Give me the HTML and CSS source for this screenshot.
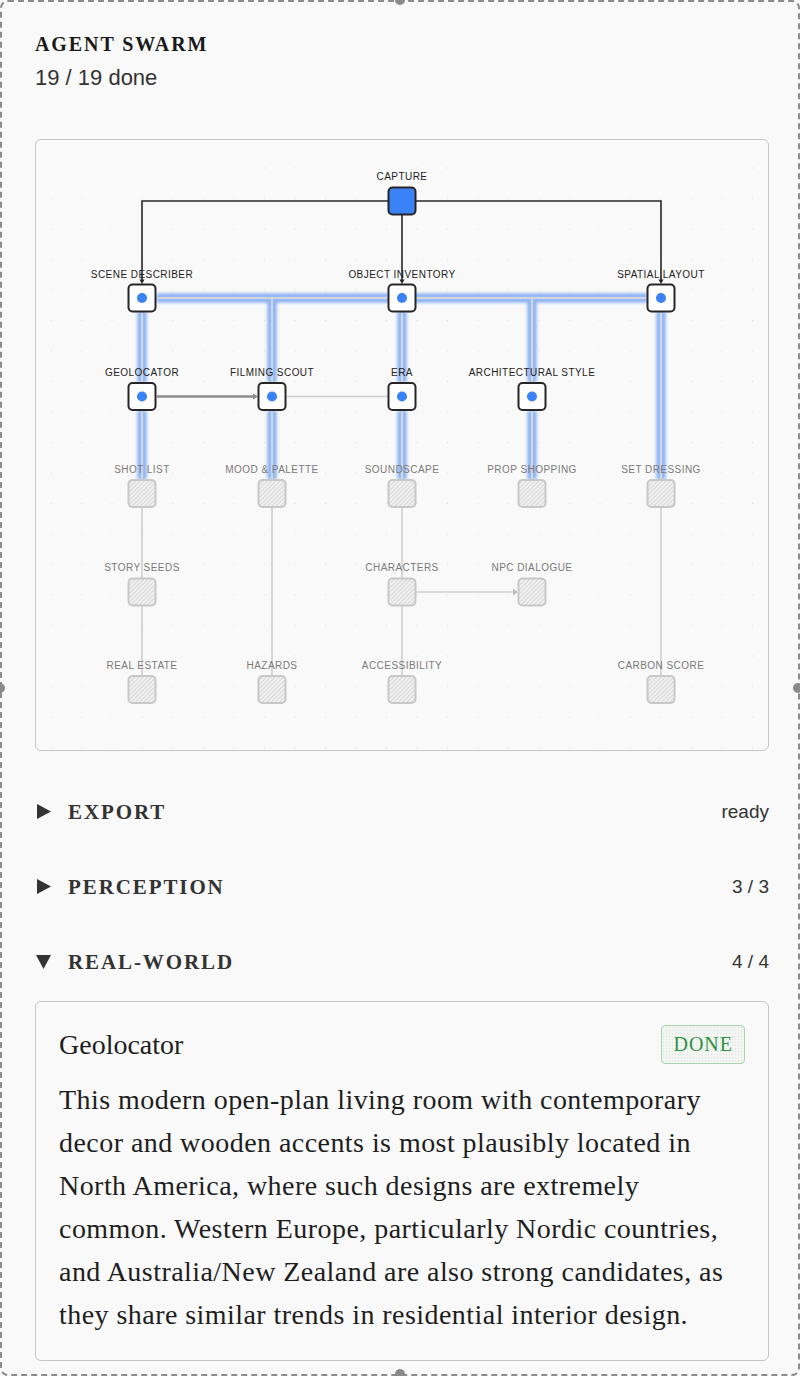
FILE: index.html
```html
<!DOCTYPE html>
<html lang="en">
<head>
<meta charset="utf-8">
<title>Agent Swarm</title>
<link rel="stylesheet" href="styles.css">
</head>
<body>
<div class="frame">
  <span class="handle h-top"></span>
  <span class="handle h-left"></span>
  <span class="handle h-right"></span>
  <span class="handle h-bottom"></span>

  <header class="head">
    <h1 class="title">AGENT SWARM</h1>
    <div class="progress">19 / 19 done</div>
  </header>

  <section class="graph">
    <svg class="graph-svg" width="732" height="610" viewBox="36 139 732 610" xmlns="http://www.w3.org/2000/svg">
      <defs>
        <pattern id="hatch" width="3" height="3" patternUnits="userSpaceOnUse" patternTransform="rotate(45)">
          <rect width="3" height="3" fill="#f0f0f0"/>
          <line x1="0.5" y1="0" x2="0.5" y2="3" stroke="#d8d8d8" stroke-width="1"/>
        </pattern>
        <pattern id="dots" x="20" y="14" width="30.5" height="30.5" patternUnits="userSpaceOnUse">
          <rect x="0" y="0" width="1" height="1" fill="#dedede"/>
        </pattern>
        <filter id="glow" filterUnits="userSpaceOnUse" x="36" y="139" width="732" height="610">
          <feGaussianBlur stdDeviation="1.6"/>
        </filter>
      </defs>

      <rect x="36" y="139" width="732" height="610" fill="url(#dots)"/>

      <!-- active (blue) edges -->
      <g class="blue-edges">
        <path class="glow-outer" filter="url(#glow)" d="M157 297H647 M272 297V381 M402 311V381 M532 297V381 M142 311V381 M142 410V478 M272 410V478 M402 410V478 M532 410V478 M661 311V478"/>
        <path class="glow-mid" d="M157 297H647 M272 297V381 M402 311V381 M532 297V381 M142 311V381 M142 410V478 M272 410V478 M402 410V478 M532 410V478 M661 311V478"/>
        <path class="glow-core" d="M157 297H647 M272 297V381 M402 311V381 M532 297V381 M142 311V381 M142 410V478 M272 410V478 M402 410V478 M532 410V478 M661 311V478"/>
      </g>

      <!-- capture edges -->
      <path class="edge-dark" d="M388 200H142V281 M402 214V281 M416 200H661V281"/>
      <polygon class="arrow-dark" points="139.5,278.5 144.5,278.5 142,283"/>
      <polygon class="arrow-dark" points="399.5,278.5 404.5,278.5 402,283"/>
      <polygon class="arrow-dark" points="658.5,278.5 663.5,278.5 661,283"/>

      <!-- secondary edges -->
      <path class="edge-mid" d="M157 395.5H256"/>
      <polygon class="arrow-mid" points="253,392.5 258,395.5 253,398.5"/>
      <path class="edge-light" d="M287 395.5H388"/>

      <!-- pending edges -->
      <path class="edge-pending" d="M142 507V577 M142 605V674 M272 507V674 M402 507V577 M402 605V674 M661 507V674 M416 591H515"/>
      <polygon class="arrow-pending" points="513,587.5 518,591 513,594.5"/>

      <!-- capture -->
      <rect class="node-capture" x="388.5" y="186.5" width="27" height="27" rx="4"/>
      <text class="lbl" x="402" y="179">CAPTURE</text>

      <!-- row 1 -->
      <rect class="node" x="128.5" y="283.5" width="27" height="27" rx="4"/><circle class="dot" cx="142" cy="297" r="5"/>
      <text class="lbl" x="142" y="277">SCENE DESCRIBER</text>
      <rect class="node" x="388.5" y="283.5" width="27" height="27" rx="4"/><circle class="dot" cx="402" cy="297" r="5"/>
      <text class="lbl" x="402" y="277">OBJECT INVENTORY</text>
      <rect class="node" x="647.5" y="283.5" width="27" height="27" rx="4"/><circle class="dot" cx="661" cy="297" r="5"/>
      <text class="lbl" x="661" y="277">SPATIAL LAYOUT</text>

      <!-- row 2 -->
      <rect class="node" x="128.5" y="382" width="27" height="27" rx="4"/><circle class="dot" cx="142" cy="395.5" r="5"/>
      <text class="lbl" x="142" y="375">GEOLOCATOR</text>
      <rect class="node" x="258.5" y="382" width="27" height="27" rx="4"/><circle class="dot" cx="272" cy="395.5" r="5"/>
      <text class="lbl" x="272" y="375">FILMING SCOUT</text>
      <rect class="node" x="388.5" y="382" width="27" height="27" rx="4"/><circle class="dot" cx="402" cy="395.5" r="5"/>
      <text class="lbl" x="402" y="375">ERA</text>
      <rect class="node" x="518.5" y="382" width="27" height="27" rx="4"/><circle class="dot" cx="532" cy="395.5" r="5"/>
      <text class="lbl" x="532" y="375">ARCHITECTURAL STYLE</text>

      <!-- row 3 -->
      <rect class="node-pending" x="128.5" y="479" width="27" height="27" rx="4"/>
      <text class="lbl pending" x="142" y="472">SHOT LIST</text>
      <rect class="node-pending" x="258.5" y="479" width="27" height="27" rx="4"/>
      <text class="lbl pending" x="272" y="472">MOOD &amp; PALETTE</text>
      <rect class="node-pending" x="388.5" y="479" width="27" height="27" rx="4"/>
      <text class="lbl pending" x="402" y="472">SOUNDSCAPE</text>
      <rect class="node-pending" x="518.5" y="479" width="27" height="27" rx="4"/>
      <text class="lbl pending" x="532" y="472">PROP SHOPPING</text>
      <rect class="node-pending" x="647.5" y="479" width="27" height="27" rx="4"/>
      <text class="lbl pending" x="661" y="472">SET DRESSING</text>

      <!-- row 4 -->
      <rect class="node-pending" x="128.5" y="577.5" width="27" height="27" rx="4"/>
      <text class="lbl pending" x="142" y="570">STORY SEEDS</text>
      <rect class="node-pending" x="388.5" y="577.5" width="27" height="27" rx="4"/>
      <text class="lbl pending" x="402" y="570">CHARACTERS</text>
      <rect class="node-pending" x="518.5" y="577.5" width="27" height="27" rx="4"/>
      <text class="lbl pending" x="532" y="570">NPC DIALOGUE</text>

      <!-- row 5 -->
      <rect class="node-pending" x="128.5" y="675" width="27" height="27" rx="4"/>
      <text class="lbl pending" x="142" y="668">REAL ESTATE</text>
      <rect class="node-pending" x="258.5" y="675" width="27" height="27" rx="4"/>
      <text class="lbl pending" x="272" y="668">HAZARDS</text>
      <rect class="node-pending" x="388.5" y="675" width="27" height="27" rx="4"/>
      <text class="lbl pending" x="402" y="668">ACCESSIBILITY</text>
      <rect class="node-pending" x="647.5" y="675" width="27" height="27" rx="4"/>
      <text class="lbl pending" x="661" y="668">CARBON SCORE</text>
    </svg>
  </section>

  <section class="groups">
    <div class="group-row">
      <div class="group-title">
        <svg class="caret" width="15" height="15" viewBox="0 0 15 15"><polygon points="1,0 15,7.5 1,15"/></svg>
        <span>EXPORT</span>
      </div>
      <span class="group-meta">ready</span>
    </div>
    <div class="group-row">
      <div class="group-title">
        <svg class="caret" width="15" height="15" viewBox="0 0 15 15"><polygon points="1,0 15,7.5 1,15"/></svg>
        <span>PERCEPTION</span>
      </div>
      <span class="group-meta">3 / 3</span>
    </div>
    <div class="group-row">
      <div class="group-title">
        <svg class="caret" width="15" height="15" viewBox="0 0 15 15"><polygon points="0,1 15,1 7.5,15"/></svg>
        <span>REAL-WORLD</span>
      </div>
      <span class="group-meta">4 / 4</span>
    </div>
  </section>

  <article class="card">
    <div class="card-head">
      <h2 class="card-title">Geolocator</h2>
      <span class="badge">DONE</span>
    </div>
    <p class="card-body">This modern open-plan living room with contemporary decor and wooden accents is most plausibly located in North America, where such designs are extremely common. Western Europe, particularly Nordic countries, and Australia/New Zealand are also strong candidates, as they share similar trends in residential interior design.</p>
  </article>
</div>
</body>
</html>
```

FILE: styles.css
```css
* { box-sizing: border-box; }

html, body {
  margin: 0;
  padding: 0;
  background: #f8f8f8;
}

.frame {
  position: relative;
  width: 800px;
  height: 1376px;
  border: 2px dashed #8c8c8c;
  border-radius: 8px;
  padding: 30px 29px 0 33px;
  background: #f9f9f9;
  overflow: visible;
}

.handle {
  position: absolute;
  width: 10px;
  height: 10px;
  border-radius: 50%;
  background: #8a8a8a;
}
.h-top { top: -7px; left: 393px; }
.h-bottom { top: 1367px; left: 393px; }
.h-left { top: 681px; left: -7px; }
.h-right { top: 681px; left: 791px; }

.title {
  margin: 0;
  font: bold 20px/24px "Liberation Serif", serif;
  letter-spacing: 1.9px;
  color: #1a1a1a;
}

.progress {
  margin-top: 8px;
  font: 22px/28px "Liberation Sans", sans-serif;
  color: #333;
}

.graph {
  margin-top: 47px;
  height: 612px;
  border: 1px solid #c9c4c7;
  border-radius: 6px;
  background: #f9f9f9;
  overflow: hidden;
}

.graph-svg { display: block; }

.glow-outer, .glow-mid, .glow-core { fill: none; }
.glow-outer { stroke: #4a88f2; stroke-width: 9.5; opacity: 0.62; }
.glow-mid { stroke: #9fbdf4; stroke-width: 4.5; opacity: 0.75; }
.glow-core { stroke: #d0d6e0; stroke-width: 2; }

.edge-dark { fill: none; stroke: #262626; stroke-width: 1.6; }
.arrow-dark { fill: #262626; }
.edge-mid { fill: none; stroke: #8d8d8d; stroke-width: 2.4; }
.arrow-mid { fill: #8d8d8d; }
.edge-light { fill: none; stroke: #d0d0d0; stroke-width: 1.3; }
.edge-pending { fill: none; stroke: #cfcfcf; stroke-width: 1.6; }
.arrow-pending { fill: #bdbdbd; }

.node { fill: #ffffff; stroke: #262626; stroke-width: 2; }
.node-capture { fill: #3b82f6; stroke: #262626; stroke-width: 2; }
.node-pending { fill: url(#hatch); stroke: #c8c8c8; stroke-width: 2; }
.dot { fill: #3b82f6; }

.lbl {
  font-family: "Liberation Sans", sans-serif;
  font-size: 10px;
  letter-spacing: 0.45px;
  text-anchor: middle;
  fill: #222;
}
.lbl.pending { fill: #7a7a7a; }

.groups { margin-top: 23px; }

.group-row {
  height: 75px;
  display: flex;
  align-items: center;
  justify-content: space-between;
}

.group-title {
  display: flex;
  align-items: center;
  gap: 17px;
  padding-left: 1px;
  font: bold 21px/24px "Liberation Serif", serif;
  letter-spacing: 1.9px;
  color: #333;
}

.caret { display: block; fill: #333; }

.group-meta {
  font: 19px/24px "Liberation Sans", sans-serif;
  color: #333;
}

.card {
  margin-top: 2px;
  border: 1px solid #c9c4c7;
  border-radius: 6px;
  padding: 23px 23px 24px 23px;
  background: #f9f9f9;
}

.card-head {
  display: flex;
  align-items: center;
  justify-content: space-between;
}

.card-title {
  margin: 0;
  font: normal 28px/32px "Liberation Serif", serif;
  color: #1e1e1e;
}

.badge {
  display: inline-block;
  height: 39px;
  padding: 0 11px;
  border: 1px solid #a9d3b3;
  border-radius: 4px;
  background-color: #f3f5f3;
  background-image: radial-gradient(#dfe4df 0.6px, transparent 0.8px);
  background-size: 3px 3px;
  font: 20px/37px "Liberation Serif", serif;
  letter-spacing: 1px;
  color: #2f9346;
}

.card-body {
  margin: 14px 0 0 0;
  font: 28px/43px "Liberation Serif", serif;
  letter-spacing: 0.45px;
  color: #1e1e1e;
}
```
